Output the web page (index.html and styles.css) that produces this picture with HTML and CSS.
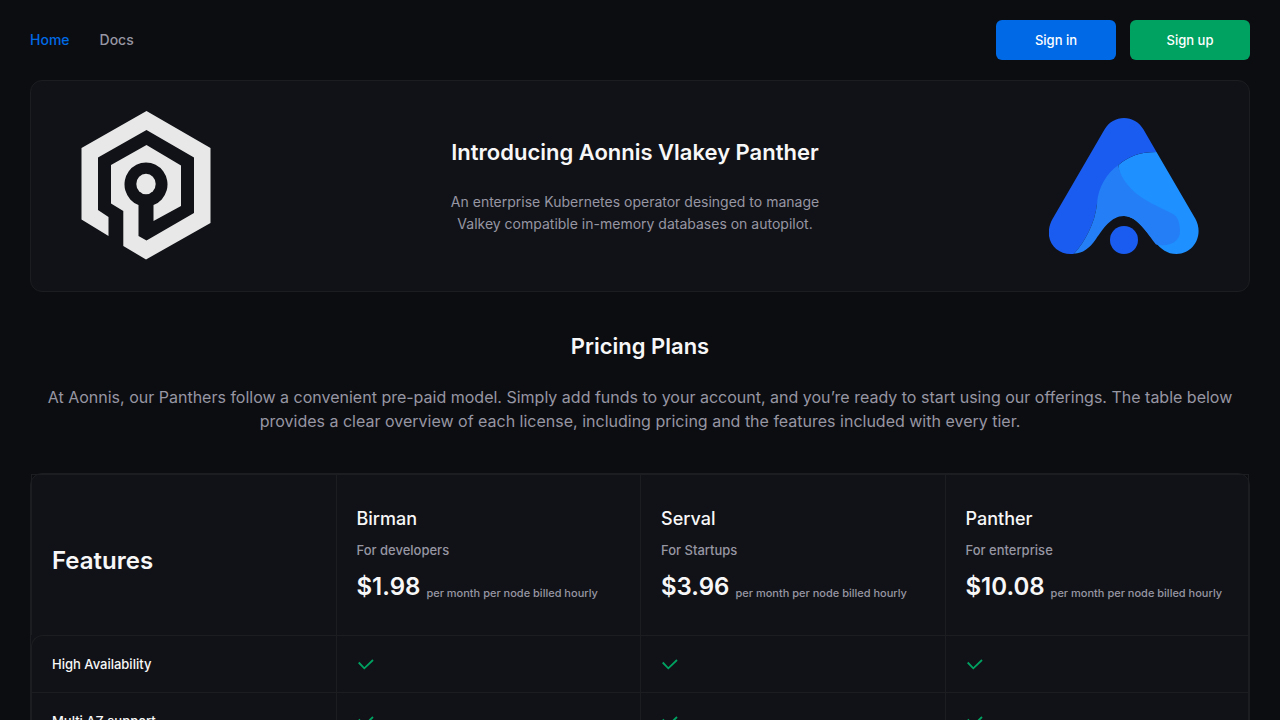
FILE: index.html
```html
<!DOCTYPE html>
<html lang="en">
<head>
<meta charset="utf-8">
<meta name="viewport" content="width=device-width, initial-scale=1">
<title>Aonnis</title>
<link rel="stylesheet" href="styles.css">
</head>
<body>
<svg class="sprite" aria-hidden="true">
  <symbol id="check" viewBox="0 0 18 18"><path d="M1.700 7.500 7.300 13.300 16 5" fill="none" stroke="currentColor" stroke-width="1.800"/></symbol>
</svg>
<header class="topbar">
  <nav class="nav">
    <a class="nav-link nav-link-active" href="#">Home</a>
    <a class="nav-link" href="#">Docs</a>
  </nav>
  <div class="actions">
    <button class="button button-primary" type="button">Sign in</button>
    <button class="button button-success" type="button">Sign up</button>
  </div>
</header>
<main class="page">
  <section class="hero">
    <svg class="hero-operator" viewBox="0 0 140 150" role="img" aria-label="Panther">
      <path fill="#e8e8e8" d="M65.5 0 129.5 37V112L65 148.500 42.300 135V100L30 92.500V54L65.500 34 100 54.500V95L72.500 110V94A21.500 22 0 1 0 57.500 94V125L65.500 129.500 113 102V46.500L65.500 19 17 46.500V99L27.500 106V125L.5 108.500V37Z"/>
      <ellipse fill="#e8e8e8" cx="65" cy="73" rx="9.700" ry="10.300"/>
    </svg>
    <div class="hero-copy">
      <h1 class="hero-title">Introducing Aonnis Vlakey Panther</h1>
      <p class="hero-text">An enterprise Kubernetes operator desinged to manage<br>Valkey compatible in-memory databases on autopilot.</p>
    </div>
    <svg class="hero-brand" viewBox="0 0 150 150" role="img" aria-label="Aonnis">
      <path fill="#1e90ff" d="M69.500 54C79 45.500 91 41 107.500 41L146.500 108C155 124 145 143 127.500 143 118 143 112 138 107 132 98 122 88 105 75 105Z"/>
      <path fill="#1a5cf0" d="M55.500 18.500C64 3 86 3 94.500 18.500L107.500 41C91 41 79 45.500 69.500 54L48 93C46 112 36 131 25 142.800 6 145-7 127 3.500 108Z"/>
      <path fill="#247ff7" d="M69.500 54C70 60 73 67 79 74 88 86 102 92 124 103 129 106 131 112 131 120 131 132 119 136 107 133.500 98 122 88 105 75 105S54 118 47 128 34 142 25 142.800C36 131 46 112 48 93 49 76 58 62 69.500 54Z"/>
      <circle fill="#1a5cf0" cx="75" cy="129" r="14"/>
    </svg>
  </section>
  <section class="pricing">
    <h2 class="pricing-title">Pricing Plans</h2>
    <p class="pricing-text">At Aonnis, our Panthers follow a convenient pre-paid model. Simply add funds to your account, and you’re ready to start using our offerings. The table below provides a clear overview of each license, including pricing and the features included with every tier.</p>
    <div class="plans-frame">
      <table class="plans">
        <thead>
          <tr>
            <th class="features-heading" scope="col">Features</th>
            <th scope="col"><div class="plan-name">Birman</div><div class="plan-audience">For developers</div><div class="plan-price"><span class="amount">$1.98</span><span class="period">per month per node billed hourly</span></div></th>
            <th scope="col"><div class="plan-name">Serval</div><div class="plan-audience">For Startups</div><div class="plan-price"><span class="amount">$3.96</span><span class="period">per month per node billed hourly</span></div></th>
            <th scope="col"><div class="plan-name">Panther</div><div class="plan-audience">For enterprise</div><div class="plan-price"><span class="amount">$10.08</span><span class="period">per month per node billed hourly</span></div></th>
          </tr>
        </thead>
        <tbody>
          <tr>
            <th scope="row">High Availability</th>
            <td><svg class="check" role="img" aria-label="Included"><use href="#check"/></svg></td>
            <td><svg class="check" role="img" aria-label="Included"><use href="#check"/></svg></td>
            <td><svg class="check" role="img" aria-label="Included"><use href="#check"/></svg></td>
          </tr>
          <tr>
            <th scope="row">Multi AZ support</th>
            <td><svg class="check" role="img" aria-label="Included"><use href="#check"/></svg></td>
            <td><svg class="check" role="img" aria-label="Included"><use href="#check"/></svg></td>
            <td><svg class="check" role="img" aria-label="Included"><use href="#check"/></svg></td>
          </tr>
        </tbody>
      </table>
    </div>
  </section>
</main>
</body>
</html>
```
FILE: styles.css
```css
:root {
  --bg: #0c0d11;
  --surface: #111217;
  --line: #1c1d21;
  --text: #f7f7f8;
  --muted: #9796a3;
}

* { box-sizing: border-box; }

body {
  margin: 0;
  background: var(--bg);
  color: var(--text);
  font-family: Inter, "Liberation Sans", sans-serif;
  font-size: 14px;
}

.sprite { display: none; }

.topbar {
  display: flex;
  justify-content: space-between;
  align-items: center;
  padding: 20px 30px;
}

.nav { display: flex; gap: 30px; }

.nav-link {
  color: var(--muted);
  font-weight: 500;
  line-height: 20px;
  text-decoration: none;
}

.nav-link-active { color: #006ae6; }

.actions { display: flex; gap: 14px; }

.button {
  width: 120px;
  height: 40px;
  border: 0;
  border-radius: 6px;
  color: #ffffff;
  font-family: inherit;
  font-size: 13px;
  font-weight: 500;
}

.button-primary { background: #006ae6; }
.button-success { background: #00a262; }

.page { padding: 0 30px; }

.hero {
  display: flex;
  justify-content: space-between;
  align-items: center;
  padding: 30px 50px;
  background: var(--surface);
  border: 1px solid var(--line);
  border-radius: 12px;
}

.hero-operator { width: 140px; height: 150px; }
.hero-brand { width: 150px; height: 150px; }
.hero-copy { text-align: center; }

.hero-title,
.pricing-title {
  margin: 0;
  font-size: 22px;
  font-weight: 600;
  line-height: 28px;
}

.hero-text {
  margin: 25px 0 0;
  color: var(--muted);
  line-height: 22px;
}

.pricing { padding: 40px 0; text-align: center; }

.pricing-text {
  margin: 25px 0 40px;
  color: var(--muted);
  font-size: 16px;
  line-height: 24px;
}

.plans-frame {
  background: var(--surface);
  border: 1px solid var(--line);
  border-radius: 12px;
}

.plans {
  width: 100%;
  table-layout: fixed;
  border-collapse: separate;
  border-spacing: 0;
  text-align: left;
}

.plans th,
.plans td {
  height: 57px;
  padding: 0 20px;
  border: 0 solid var(--line);
  border-top-width: 1px;
  border-left-width: 1px;
  font-size: 13px;
  font-weight: 500;
  vertical-align: middle;
}

.plans tr > :last-child { border-right-width: 1px; }

.plans tbody tr:first-child th { border-top-left-radius: 12px; }

.plans thead th {
  padding: 30px 20px 32px;
}

.plans thead .features-heading {
  padding-top: 42px;
  font-size: 24px;
  font-weight: 600;
}

.plan-name { font-size: 18px; line-height: 28px; }

.plan-audience {
  margin-top: 7px;
  color: var(--muted);
  line-height: 20px;
}

.plan-price {
  display: flex;
  align-items: flex-end;
  gap: 6px;
  margin-top: 11px;
}

.amount { font-size: 24px; font-weight: 600; line-height: 32px; }

.period {
  color: var(--muted);
  font-size: 11px;
  line-height: 20px;
}

.check {
  display: block;
  width: 18px;
  height: 18px;
  color: #00a262;
}
```
